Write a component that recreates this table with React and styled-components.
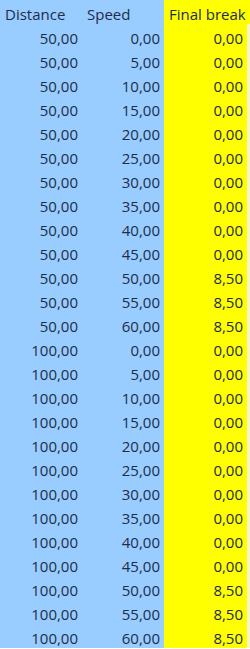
import React from "react";
import styled, { createGlobalStyle } from "styled-components";

const Global = createGlobalStyle`
  html, body { margin: 0; padding: 0; background: #ffffff; }
  body { width: 250px; height: 649px; overflow: hidden; }
`;

const Sheet = styled.div`
  display: grid;
  grid-template-columns: 82px 82px 83px 3px;
  grid-auto-rows: 24px;
  width: 250px;
  font-family: "Open Sans", "Liberation Sans", sans-serif;
  font-size: 15px;
  color: #1d2d4a;
  overflow: hidden;
`;

const Cell = styled.div`
  background: ${(p) => (p.$tone === "yellow" ? "#ffff00" : p.$tone === "edge" ? "#f6f6cc" : "#99ccff")};
  display: flex;
  align-items: center;
  justify-content: ${(p) => (p.$head ? "flex-start" : "flex-end")};
  padding: ${(p) => (p.$head ? "4px 0 0 5px" : "4px 4px 0 0")};
  white-space: nowrap;
  overflow: ${(p) => (p.$overflow ? "visible" : "hidden")};
  line-height: 1;
`;

const fmt = (n) => n.toFixed(2).replace(".", ",");

const speeds = [0, 5, 10, 15, 20, 25, 30, 35, 40, 45, 50, 55, 60];
const rows = [50, 100].flatMap((d) =>
  speeds.map((s) => ({ d, s, f: s >= 50 ? 8.5 : 0 }))
);

export default function App() {
  return (
    <>
      <Global />
      <Sheet>
        <Cell $head>Distance</Cell>
        <Cell $head>Speed</Cell>
        <Cell $head $tone="yellow" $overflow>Final break</Cell>
        <Cell $tone="yellow" />
        {rows.map((r, i) => (
          <React.Fragment key={i}>
            <Cell>{fmt(r.d)}</Cell>
            <Cell>{fmt(r.s)}</Cell>
            <Cell $tone="yellow">{fmt(r.f)}</Cell>
            <Cell $tone="edge" />
          </React.Fragment>
        ))}
      </Sheet>
    </>
  );
}
